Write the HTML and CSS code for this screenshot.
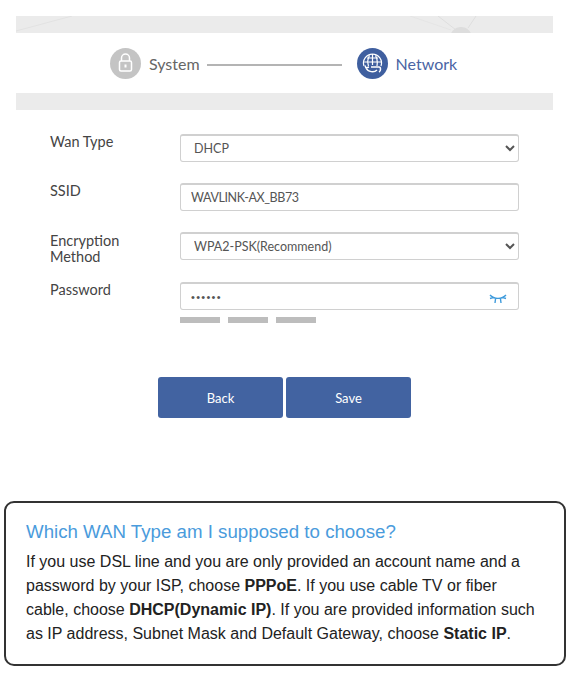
FILE: index.html
```html
<!DOCTYPE html>
<html lang="en">
<head>
    <meta charset="UTF-8">
    <meta name="viewport" content="width=device-width, initial-scale=1.0">
    <title>Wizard</title>
    <link rel="stylesheet" href="styles.css">
</head>
<body>
    <div class="wizard">
        <div class="band band-top">
            <svg class="band-art" width="537" height="17" viewBox="0 0 537 17">
                <path d="M0 15 L56 0" stroke="#e2e2e2" fill="none"/>
                <path d="M422 0 L440 14 M460 0 L452 12" stroke="#dedede" fill="none"/>
                <path d="M394 0 L435 14" stroke="#e5e5e5" fill="none"/>
                <circle cx="445" cy="22" r="11" fill="#dddddd"/>
            </svg>
        </div>

        <div class="steps">
            <div class="step-icon step-icon-off">
                <svg width="31" height="31" viewBox="0 0 31 31">
                    <path d="M11.5 13 V10 a4 4 0 0 1 8 0 V13" fill="none" stroke="#fff" stroke-width="1.5"/>
                    <rect x="9.5" y="13" width="12" height="10" rx="1.5" fill="none" stroke="#fff" stroke-width="1.5"/>
                    <rect x="14.5" y="16.5" width="2" height="3" fill="#fff"/>
                </svg>
            </div>
            <span class="step-name">System</span>
            <div class="step-line"></div>
            <div class="step-icon step-icon-on">
                <svg width="31" height="31" viewBox="0 0 31 31">
                    <g fill="none" stroke="#fff" stroke-width="1.2">
                        <path d="M7 18 A9 9 0 1 1 24 18"/>
                        <path d="M10 10 H21 M7.2 14 H24 M12.5 7.5 C10.5 11 10.5 15 11.5 18 M18.5 7.5 C20.5 11 20.5 15 20 18 M15.5 6 V17"/>
                    </g>
                    <path d="M9 20 C11 24 17 25 20 22 M9 20 L8 17.5 M9 20 L12 19" fill="none" stroke="#fff" stroke-width="1.5"/>
                    <path d="M14 19 H22 C24 19 24 23 22 24" fill="none" stroke="#fff" stroke-width="1.5"/>
                </svg>
            </div>
            <span class="step-name step-name-on">Network</span>
        </div>

        <div class="band"></div>
    </div>

    <form class="setup-form">
        <div class="form-row">
            <label class="form-label">Wan Type</label>
            <select class="form-field form-select">
                <option>DHCP</option>
            </select>
        </div>
        <div class="form-row">
            <label class="form-label">SSID</label>
            <input class="form-field form-text" type="text" value="WAVLINK-AX_BB73">
        </div>
        <div class="form-row form-row-wide">
            <label class="form-label">Encryption Method</label>
            <select class="form-field form-select">
                <option>WPA2-PSK(Recommend)</option>
            </select>
        </div>
        <div class="form-row form-row-last">
            <label class="form-label">Password</label>
            <div class="password-wrap">
                <div class="password-box">
                    <input class="password-input" type="password" value="123456">
                    <svg class="eye" width="18" height="10" viewBox="0 0 18 10">
                        <path d="M1 1 C5 5.5 13 5.5 17 1 M1 4.5 L4 3.5 M17 4.5 L14 3.5 M6.5 5 L6 9 M11.5 5 L12 9" fill="none" stroke="#3f9bdc" stroke-width="1.4"/>
                    </svg>
                </div>
                <div class="strength">
                    <span class="strength-bar"></span>
                    <span class="strength-bar"></span>
                    <span class="strength-bar"></span>
                </div>
            </div>
        </div>
        <div class="form-buttons">
            <button type="button" class="form-btn">Back</button>
            <button type="button" class="form-btn">Save</button>
        </div>
    </form>

    <div class="help-box">
        <h2 class="help-title">Which WAN Type am I supposed to choose?</h2>
        <p class="help-text">If you use DSL line and you are only provided an account name and a password by your ISP, choose <b>PPPoE</b>. If you use cable TV or fiber cable, choose <b>DHCP(Dynamic IP)</b>. If you are provided information such as IP address, Subnet Mask and Default Gateway, choose <b>Static IP</b>.</p>
    </div>
</body>
</html>
```

FILE: styles.css
```css
body {
    margin: 0;
    background: #fff;
    font-family: Lato, "Open Sans", sans-serif;
    color: #444;
}
.wizard {
    margin: 16px 33px 0 16px;
}
.band {
    height: 17px;
    background: #ebebeb;
}
.band-top {
    overflow: hidden;
}
.band-art {
    display: block;
}
.steps {
    display: flex;
    align-items: center;
    height: 60px;
    box-sizing: border-box;
    padding: 1px 0 0 94px;
}
.step-icon {
    width: 31px;
    height: 31px;
    border-radius: 50%;
}
.step-icon svg {
    display: block;
}
.step-icon-off {
    background: #c4c4c4;
}
.step-icon-on {
    background: #3f5f9f;
}
.step-name {
    margin-left: 8px;
    font-size: 16px;
    color: #666;
}
.step-name-on {
    color: #4a64a4;
}
.step-line {
    width: 135px;
    height: 2px;
    margin: 2px 15px 0 7px;
    background: #b4b4b4;
}
.setup-form {
    margin-top: 24px;
    padding-left: 50px;
}
.form-row {
    display: flex;
    align-items: flex-start;
    height: 28px;
    margin-bottom: 21px;
}
.form-row-wide {
    margin-bottom: 22px;
}
.form-row-wide .form-label {
    padding-top: 1px;
}
.form-row-last {
    height: auto;
    margin-bottom: 54px;
}
.form-label {
    width: 130px;
    font-size: 14.5px;
    line-height: 16px;
    color: #444;
    padding-right: 50px;
    box-sizing: border-box;
}
.form-field {
    width: 339px;
    height: 28px;
    box-sizing: border-box;
    padding: 0 10px;
    border: 1px solid #d0d0d0;
    border-top-width: 2px;
    border-radius: 3px;
    background: #fff;
    font-family: Lato, "Open Sans", sans-serif;
    font-size: 12.5px;
    color: #555;
}
.form-text {
    letter-spacing: -0.4px;
}
.form-select {
    padding: 0 6px 0 9px;
}
.password-wrap {
    width: 339px;
}
.password-box {
    display: flex;
    align-items: center;
    height: 28px;
    box-sizing: border-box;
    padding: 0 11px 0 10px;
    border: 1px solid #d0d0d0;
    border-top-width: 2px;
    border-radius: 3px;
}
.password-input {
    flex: 1;
    min-width: 0;
    border: none;
    outline: none;
    padding: 0;
    font-size: 11px;
    letter-spacing: 1.3px;
    color: #555;
}
.eye {
    margin-top: 4px;
}
.strength {
    display: flex;
    gap: 8px;
    margin-top: 7px;
}
.strength-bar {
    width: 40px;
    height: 6px;
    background: #bdbdbd;
}
.form-buttons {
    display: flex;
    gap: 3px;
    padding-left: 108px;
}
.form-btn {
    width: 125px;
    height: 41px;
    border: none;
    border-radius: 3px;
    background: #4263a1;
    color: #fff;
    font-family: Lato, "Open Sans", sans-serif;
    font-size: 13px;
}
.help-box {
    width: 562px;
    height: 165px;
    box-sizing: border-box;
    margin: 83px 0 0 4px;
    padding: 17px 28px 0 20px;
    border: 2px solid #333;
    border-radius: 10px;
    font-family: "Liberation Sans", Arial, sans-serif;
}
.help-title {
    margin: 0;
    font-size: 18.7px;
    font-weight: normal;
    line-height: 24px;
    color: #4a9bdc;
}
.help-text {
    margin: 6px 0 0;
    font-size: 16px;
    line-height: 24px;
    color: #222;
}
```
